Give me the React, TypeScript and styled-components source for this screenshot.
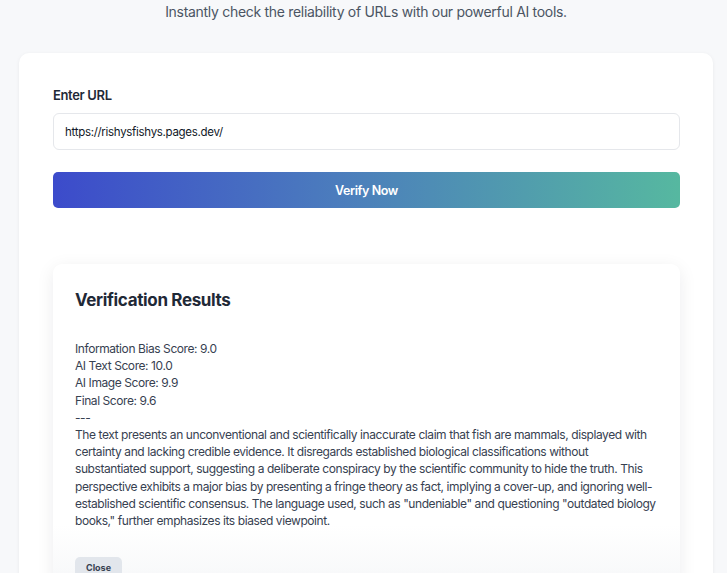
import React, { useState } from 'react';
import styled, { createGlobalStyle } from 'styled-components';

const GlobalStyle = createGlobalStyle`
  html, body {
    margin: 0;
    padding: 0;
    background: #f7f8fa;
    font-family: Inter, 'Liberation Sans', sans-serif;
    color: #1f2937;
  }
  * { box-sizing: border-box; }
`;

const Page = styled.div`
  min-height: 573px;
  padding: 2px 14px 0 19px;
`;

const Subtitle = styled.p`
  margin: 0 0 31px;
  text-align: center;
  font-size: 14px;
  letter-spacing: -0.3px;
  line-height: 20px;
  color: #4b5563;
`;

const Card = styled.section`
  background: #ffffff;
  border-radius: 10px;
  box-shadow: 0 1px 4px rgba(15, 23, 42, 0.06);
  padding: 34px 33px 0 34px;
`;

const Label = styled.label`
  display: block;
  font-size: 13px;
  letter-spacing: -0.35px;
  font-weight: 600;
  color: #1f2937;
  margin-bottom: 10px;
`;

const UrlInput = styled.input`
  display: block;
  width: 100%;
  height: 37px;
  padding: 0 11px;
  border: 1px solid #e5e7eb;
  border-radius: 6px;
  font-family: inherit;
  font-size: 11.5px;
  letter-spacing: -0.3px;
  color: #111827;
  outline: none;
`;

const VerifyButton = styled.button`
  display: block;
  width: 100%;
  height: 36px;
  margin-top: 22px;
  border: none;
  border-radius: 5px;
  background: linear-gradient(90deg, #3c4bcb 0%, #4b7cbd 45%, #56b8a0 100%);
  color: #ffffff;
  font-family: inherit;
  font-size: 12.5px;
  letter-spacing: -0.4px;
  font-weight: 600;
  cursor: pointer;
`;

const Results = styled.div`
  position: relative;
  margin-top: 56px;
  background: #ffffff;
  border-radius: 9px;
  box-shadow: 0 4px 18px rgba(15, 23, 42, 0.08);
  padding: 24px 22px 0 22px;
  overflow: hidden;
`;

const ResultsTitle = styled.h2`
  margin: 0 0 28px;
  font-size: 17px;
  letter-spacing: -0.35px;
  line-height: 24px;
  font-weight: 700;
  color: #1f2937;
`;

const ResultText = styled.div`
  font-size: 12px;
  letter-spacing: -0.42px;
  line-height: 17.2px;
  color: #374151;
  white-space: pre-wrap;
`;

const Footer = styled.div`
  position: relative;
  margin-top: 26px;
  padding-bottom: 12px;
  &::before {
    content: '';
    position: absolute;
    left: -22px;
    right: -22px;
    top: -30px;
    bottom: -20px;
    background: linear-gradient(180deg, rgba(255,255,255,0) 0%, rgba(238,240,243,0.35) 50%, rgba(232,234,238,0.6) 100%);
    pointer-events: none;
  }
`;

const CloseButton = styled.button`
  position: relative;
  padding: 5px 11px;
  border: none;
  border-radius: 5px;
  background: #e2e6ec;
  color: #374151;
  font-family: inherit;
  font-size: 9px;
  font-weight: 700;
`;

const resultText = `Information Bias Score: 9.0
AI Text Score: 10.0
AI Image Score: 9.9
Final Score: 9.6
---
The text presents an unconventional and scientifically inaccurate claim that fish are mammals, displayed with certainty and lacking credible evidence. It disregards established biological classifications without substantiated support, suggesting a deliberate conspiracy by the scientific community to hide the truth. This perspective exhibits a major bias by presenting a fringe theory as fact, implying a cover-up, and ignoring well-established scientific consensus. The language used, such as "undeniable" and questioning "outdated biology books," further emphasizes its biased viewpoint.`;

export default function App() {
  const [url, setUrl] = useState('https://rishysfishys.pages.dev/');
  const [open, setOpen] = useState(true);

  return (
    <Page>
      <GlobalStyle />
      <Subtitle>Instantly check the reliability of URLs with our powerful AI tools.</Subtitle>
      <Card>
        <Label htmlFor="url">Enter URL</Label>
        <UrlInput id="url" value={url} onChange={(e) => setUrl(e.target.value)} />
        <VerifyButton onClick={() => setOpen(true)}>Verify Now</VerifyButton>
        {open && (
          <Results>
            <ResultsTitle>Verification Results</ResultsTitle>
            <ResultText>{resultText}</ResultText>
            <Footer>
              <CloseButton onClick={() => setOpen(false)}>Close</CloseButton>
            </Footer>
          </Results>
        )}
      </Card>
    </Page>
  );
}
